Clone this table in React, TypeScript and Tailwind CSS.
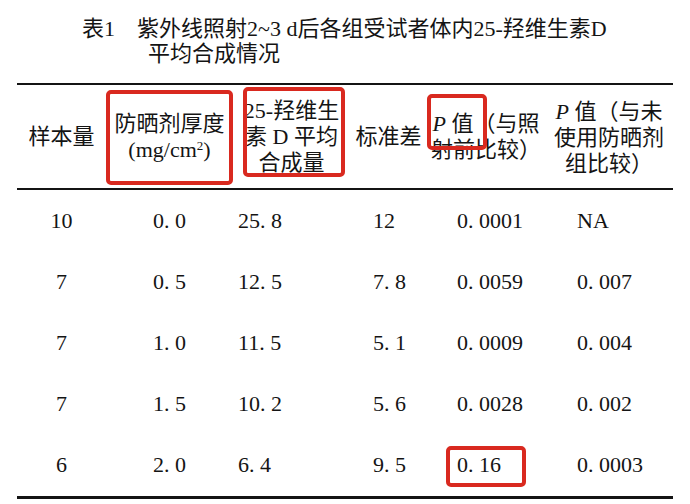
const rows = [
  ["10", "0. 0", "25. 8", "12", "0. 0001", "NA"],
  ["7", "0. 5", "12. 5", "7. 8", "0. 0059", "0. 007"],
  ["7", "1. 0", "11. 5", "5. 1", "0. 0009", "0. 004"],
  ["7", "1. 5", "10. 2", "5. 6", "0. 0028", "0. 002"],
  ["6", "2. 0", "6. 4", "9. 5", "0. 16", "0. 0003"],
]

// left padding of each data column, col 1 and 2 are centred
const pads = ["justify-center", "justify-center", "pl-[5px]", "pl-[23px]", "pl-[30px]", "pl-[32px]"]

function RedBox({ className }: { className: string }) {
  return <div className={`pointer-events-none absolute rounded-[5px] border-4 border-[#d9291f] ${className}`} />
}

export default function App() {
  return (
    <div className="h-[504px] w-[690px] overflow-hidden bg-white text-[#141414] font-['Liberation_Serif','Noto_Sans_CJK_SC',serif]">
      <div className="pt-[16px] text-[22px] leading-[25px]">
        <div className="pl-[82px] whitespace-nowrap">表1&nbsp;&nbsp;&nbsp;&nbsp;紫外线照射2~3 d后各组受试者体内25-羟维生素D</div>
        <div className="pl-[148px]">平均合成情况</div>
      </div>

      <div className="ml-[17px] mt-[17px] w-[656px] border-t-2 border-b-[3px] border-[#141414]">
        <div className="grid h-[105px] grid-cols-[89px_127px_117px_77px_118px_128px] border-b-2 border-[#141414] text-center text-[22px] leading-[26px]">
          <div className="flex items-center justify-center">样本量</div>
          <div className="relative flex items-center justify-center">
            <div>
              防晒剂厚度
              <br />
              (mg/cm<sup className="text-[13px]">2</sup>)
            </div>
            <RedBox className="left-0 top-[5px] h-[95px] w-[127px]" />
          </div>
          <div className="relative flex items-center justify-center">
            <div className="whitespace-nowrap">
              25-羟维生
              <br />
              素 D 平均
              <br />
              合成量
            </div>
            <RedBox className="left-[10px] top-[2px] h-[90px] w-[102px]" />
          </div>
          <div className="flex items-center justify-center">标准差</div>
          <div className="relative flex items-center justify-center">
            <div className="whitespace-nowrap">
              <span className="italic">P</span> 值（与照
              <br />
              射前比较）
            </div>
            <RedBox className="left-0 top-[9px] h-[56px] w-[60px]" />
          </div>
          <div className="flex items-center justify-center pt-[3px]">
            <div className="whitespace-nowrap">
              <span className="italic">P</span> 值（与未
              <br />
              使用防晒剂
              <br />
              组比较）
            </div>
          </div>
        </div>

        <div className="pb-[1px]">
          {rows.map((row, i) => (
            <div key={i} className="grid h-[61px] grid-cols-[89px_127px_117px_77px_118px_128px] text-[22px] leading-none">
              {row.map((v, j) => (
                <div key={j} className={`relative flex items-center whitespace-nowrap ${pads[j]}`}>
                  {v}
                  {i === 4 && j === 4 && <RedBox className="left-[19px] top-[12px] h-[41px] w-[80px]" />}
                </div>
              ))}
            </div>
          ))}
        </div>
      </div>
    </div>
  )
}
